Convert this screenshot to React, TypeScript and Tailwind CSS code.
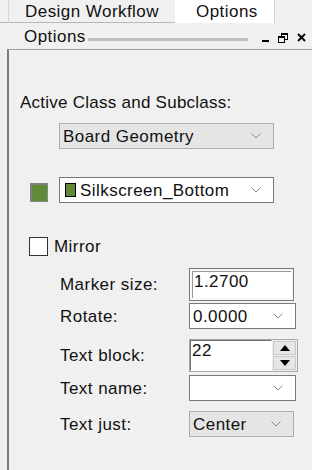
import React from "react";

function Chevron() {
  return (
    <svg width="10" height="6" viewBox="0 0 10 6" className="shrink-0">
      <polyline points="0.5,0.5 5,5 9.5,0.5" fill="none" stroke="#8a8a8a" strokeWidth="1" />
    </svg>
  );
}

function Select({ value, gray, w, swatch }: { value: string; gray?: boolean; w: string; swatch?: boolean }) {
  return (
    <div
      className={`${w} h-[26px] flex items-center pl-[3px] pr-[12px] border ${
        gray ? "bg-[#e5e5e5] border-[#adadad]" : "bg-white border-[#7a7a7a]"
      }`}
    >
      {swatch && <span className="w-[11px] h-[14px] bg-[#608a38] border border-black mr-[4px] ml-[2px] shrink-0" />}
      <span className="flex-1 leading-none whitespace-nowrap">{value}</span>
      <Chevron />
    </div>
  );
}

export default function App() {
  return (
    <div
      className="w-[312px] h-[470px] bg-[#f0f0f0] overflow-hidden flex flex-col text-[17px] tracking-[0.45px] text-[#111]"
      style={{ fontFamily: '"Liberation Sans", Arial, sans-serif' }}
    >
      {/* Tabs */}
      <div className="flex h-[23px] shrink-0">
        <div className="w-[8px] border-b border-[#b8b8b8]" />
        <div className="w-[167px] border-l border-b border-[#d4d4d4] border-b-[#b8b8b8] flex items-center pl-[16px] leading-none">
          Design Workflow
        </div>
        <div className="w-[99px] bg-white flex items-center pl-[21px] leading-none">Options</div>
        <div className="flex-1 border-l border-[#d4d4d4]" />
      </div>

      {/* Panel title */}
      <div className="flex items-center h-[26px] shrink-0 pl-[24px] pr-[6px]">
        <span className="leading-none">Options</span>
        <div className="w-[160px] h-[3px] bg-[#c0c0c0] ml-[2px] mt-[6px]" />
        <div className="flex items-center ml-[14px] gap-[9px] mt-[3px]">
          <svg width="7" height="10" viewBox="0 0 7 10">
            <rect x="0" y="7" width="7" height="2" fill="#000" />
          </svg>
          <svg width="10" height="10" viewBox="0 0 10 10">
            <rect x="3.5" y="0.5" width="6" height="6" fill="none" stroke="#000" />
            <rect x="3" y="0" width="7" height="2" fill="#000" />
            <rect x="0.5" y="3.5" width="6" height="6" fill="#f0f0f0" stroke="#000" />
            <rect x="0" y="3" width="7" height="2" fill="#000" />
          </svg>
          <svg width="9" height="9" viewBox="0 0 9 9">
            <path d="M1 1 L8 8 M8 1 L1 8" stroke="#000" strokeWidth="1.8" />
          </svg>
        </div>
      </div>

      {/* Panel body */}
      <div className="flex-1 ml-[7px] border-l-2 border-l-[#7c7c88] border-t border-t-[#a0a0a0] flex flex-col">
        <div className="mt-[44px] ml-[11px] h-[18px] flex items-center text-[17px] tracking-[0.25px] whitespace-nowrap">
          Active Class and Subclass:
        </div>
        <div className="mt-[11px] ml-[50px]">
          <Select value="Board Geometry" gray w="w-[215px]" />
        </div>

        <div className="mt-[28px] flex items-center">
          <div className="ml-[21px] w-[18px] h-[19px] border-2 border-[#7f7f7f] border-r border-b border-r-[#8a8a8a] border-b-[#8a8a8a] bg-[#608a38] mt-[5px]" />
          <div className="ml-[11px]">
            <Select value="Silkscreen_Bottom" w="w-[215px]" swatch />
          </div>
        </div>

        <div className="mt-[34px] ml-[20px] flex items-center">
          <div className="w-[19px] h-[19px] bg-white border border-[#333]" />
          <span className="ml-[6px] leading-none">Mirror</span>
        </div>

        <div className="mt-[12px] ml-[51px] grid grid-cols-[129px_auto] items-center">
          <span className="leading-none">Marker size:</span>
          <div className="w-[105px] h-[33px] border border-[#7a7a7a] p-[2px] bg-[#f8f8f8]">
            <div className="w-full h-full bg-white border-t border-l border-[#9a9a9a] pl-[1px] leading-[20px]">1.2700</div>
          </div>

          <span className="leading-none mt-[2px]">Rotate:</span>
          <div className="mt-[2px]">
            <Select value="0.0000" w="w-[107px]" />
          </div>

          <span className="leading-none mt-[10px]">Text block:</span>
          <div className="mt-[10px] w-[109px] h-[33px] border border-[#a8a8a8] flex">
            <div className="flex-1 border border-[#6f6f6f] border-r-white border-b-white bg-white pl-[1px] leading-[20px]">22</div>
            <div className="w-[25px] flex flex-col gap-[1px] p-[1px] bg-[#f0f0f0]">
              <div className="flex-1 bg-[#e6e6e6] border border-[#c8c8c8] flex items-center justify-center">
                <svg width="10" height="6" viewBox="0 0 10 6"><polygon points="5,0 10,6 0,6" fill="#000" /></svg>
              </div>
              <div className="flex-1 bg-[#e6e6e6] border border-[#c8c8c8] flex items-center justify-center">
                <svg width="10" height="6" viewBox="0 0 10 6"><polygon points="0,0 10,0 5,6" fill="#000" /></svg>
              </div>
            </div>
          </div>

          <span className="leading-none mt-[3px]">Text name:</span>
          <div className="mt-[3px]">
            <Select value="" w="w-[107px]" />
          </div>

          <span className="leading-none mt-[10px]">Text just:</span>
          <div className="mt-[10px]">
            <Select value="Center" gray w="w-[105px]" />
          </div>
        </div>
      </div>
    </div>
  );
}
